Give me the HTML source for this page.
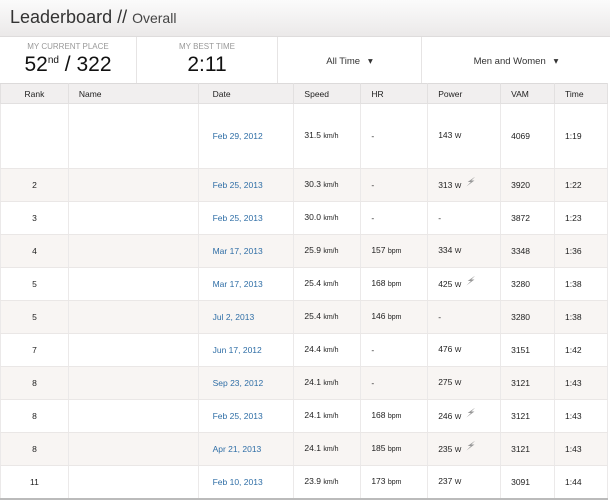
<!DOCTYPE html>
<html><head><style>
*{margin:0;padding:0;box-sizing:border-box}
body{width:610px;height:501px;background:#fff;font-family:"Liberation Sans",sans-serif;position:relative;overflow:hidden;color:#222}
.hd{position:absolute;left:0;top:0;width:610px;height:37px;background:linear-gradient(#fbfbfb,#ebe9e9);border-bottom:1px solid #dedcdc}
.hd span{position:absolute;left:10px;top:7px;font-size:18px;color:#333}
.hd small{font-size:14px;color:#444}
.st{position:absolute;top:37px;height:46px;border-right:1px solid #e6e4e4}
.lbl{position:absolute;width:100%;text-align:center;top:5px;font-size:8px;color:#999}
.big{position:absolute;width:100%;text-align:center;top:16px;font-size:21px;color:#111}
.dd{position:absolute;width:100%;text-align:center;top:19px;font-size:9.5px;color:#333}
table{position:absolute;left:0;top:83px;width:608px;border-collapse:collapse;font-size:8.5px}
th{height:20px;background:#f1efef;font-weight:normal;text-align:left;border:1px solid #e2e0e0;border-top:1px solid #dcdada;padding-left:10px;font-size:8.5px;color:#222}
td{height:33px;line-height:12px;border-left:1px solid #ebe9e9;border-right:1px solid #ebe9e9;border-bottom:1px solid #eae7e6;padding-left:10px}
tr.a td{background:#f8f5f3}
td:first-child,th:first-child{text-align:center;padding-left:0}
.d{color:#2f6ea6;padding-left:14px}
th.d{color:#222}
u{text-decoration:none;font-size:7px}
i{display:inline-block;width:9px;height:10px;background:#999;margin-left:5px;vertical-align:baseline;position:relative;top:-1px;clip-path:polygon(100% 0,15% 55%,50% 55%,0 100%,90% 40%,55% 40%)}
.last td{border-bottom:2px solid #bbb}
</style></head><body>
<div class="hd"><span>Leaderboard // <small>Overall</small></span></div>
<div class="st" style="left:0;width:137px"><div class="lbl">MY CURRENT PLACE</div><div class="big">52<sup style="font-size:10px">nd</sup> / 322</div></div>
<div class="st" style="left:137px;width:141px"><div class="lbl">MY BEST TIME</div><div class="big">2:11</div></div>
<div class="st" style="left:278px;width:144px"><div class="dd">All Time &nbsp; ▾</div></div>
<div class="st" style="left:422px;width:188px;border-right:none"><div class="dd">Men and Women &nbsp; ▾</div></div>
<table>
<colgroup><col style="width:68px"><col style="width:130px"><col style="width:96px"><col style="width:67px"><col style="width:67px"><col style="width:73px"><col style="width:54px"><col style="width:53px"></colgroup>
<tr><th>Rank</th><th>Name</th><th class="d">Date</th><th>Speed</th><th>HR</th><th>Power</th><th>VAM</th><th>Time</th></tr>
<tr><td style="height:65px"></td><td></td><td class="d">Feb 29, 2012</td><td>31.5 <u>km/h</u></td><td>-</td><td>143 <u>W</u></td><td>4069</td><td>1:19</td></tr>
<tr class="a"><td>2</td><td></td><td class="d">Feb 25, 2013</td><td>30.3 <u>km/h</u></td><td>-</td><td>313 <u>W</u><i></i></td><td>3920</td><td>1:22</td></tr>
<tr><td>3</td><td></td><td class="d">Feb 25, 2013</td><td>30.0 <u>km/h</u></td><td>-</td><td>-</td><td>3872</td><td>1:23</td></tr>
<tr class="a"><td>4</td><td></td><td class="d">Mar 17, 2013</td><td>25.9 <u>km/h</u></td><td>157 <u>bpm</u></td><td>334 <u>W</u></td><td>3348</td><td>1:36</td></tr>
<tr><td>5</td><td></td><td class="d">Mar 17, 2013</td><td>25.4 <u>km/h</u></td><td>168 <u>bpm</u></td><td>425 <u>W</u><i></i></td><td>3280</td><td>1:38</td></tr>
<tr class="a"><td>5</td><td></td><td class="d">Jul 2, 2013</td><td>25.4 <u>km/h</u></td><td>146 <u>bpm</u></td><td>-</td><td>3280</td><td>1:38</td></tr>
<tr><td>7</td><td></td><td class="d">Jun 17, 2012</td><td>24.4 <u>km/h</u></td><td>-</td><td>476 <u>W</u></td><td>3151</td><td>1:42</td></tr>
<tr class="a"><td>8</td><td></td><td class="d">Sep 23, 2012</td><td>24.1 <u>km/h</u></td><td>-</td><td>275 <u>W</u></td><td>3121</td><td>1:43</td></tr>
<tr><td>8</td><td></td><td class="d">Feb 25, 2013</td><td>24.1 <u>km/h</u></td><td>168 <u>bpm</u></td><td>246 <u>W</u><i></i></td><td>3121</td><td>1:43</td></tr>
<tr class="a"><td>8</td><td></td><td class="d">Apr 21, 2013</td><td>24.1 <u>km/h</u></td><td>185 <u>bpm</u></td><td>235 <u>W</u><i></i></td><td>3121</td><td>1:43</td></tr>
<tr class="last"><td>11</td><td></td><td class="d">Feb 10, 2013</td><td>23.9 <u>km/h</u></td><td>173 <u>bpm</u></td><td>237 <u>W</u></td><td>3091</td><td>1:44</td></tr>
</table>
</body></html>
